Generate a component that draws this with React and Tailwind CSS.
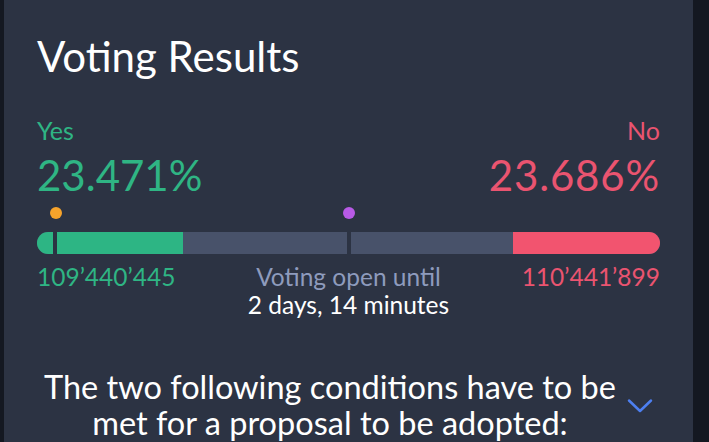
import React from 'react'

const yes = { pct: '23.471%', votes: '109’440’445' }
const no = { pct: '23.686%', votes: '110’441’899' }

export default function App() {
  return (
    <div className="flex h-[442px] w-[709px] overflow-hidden bg-[#141821] font-['Lato',sans-serif]">
      <div className="ml-[4px] flex w-[689px] flex-col bg-[#2c3343] px-[33px] pt-[31px]">
        <h1 className="text-[42px] leading-[1.2] font-normal text-white">Voting Results</h1>

        <div className="mt-[34px] flex items-start justify-between">
          <div className="flex flex-col">
            <span className="text-[25px] leading-[1.2] text-[#2fb584]">Yes</span>
            <span className="mt-[5px] text-[42px] leading-[1.2] text-[#2fb584]">{yes.pct}</span>
          </div>
          <div className="flex flex-col items-end">
            <span className="text-[25px] leading-[1.2] text-[#ea5470]">No</span>
            <span className="mt-[5px] text-[42px] leading-[1.2] tracking-[0.02em] text-[#ea5470]">{no.pct}</span>
          </div>
        </div>

        {/* quorum markers */}
        <div className="relative mt-[6px] h-[12px]">
          <span className="absolute left-[13px] top-0 h-[12px] w-[12px] rounded-full bg-[#f6a32b]" />
          <span className="absolute left-[306px] top-0 h-[12px] w-[12px] rounded-full bg-[#b85ae6]" />
        </div>

        {/* result bar */}
        <div className="relative mt-[13px] flex h-[22px] overflow-hidden rounded-full bg-[#48526a]">
          <div className="h-full bg-[#2db584]" style={{ width: 146 }} />
          <div className="flex-1" />
          <div className="h-full bg-[#f2546f]" style={{ width: 147 }} />
          <span className="absolute left-[16px] top-0 h-full w-[4px] bg-[#2c3343]" />
          <span className="absolute left-[310px] top-0 h-full w-[4px] bg-[#2c3343]" />
        </div>

        <div className="mt-[9px] flex items-start justify-between">
          <span className="w-[170px] text-[24.5px] leading-[28px] text-[#2fb584]">{yes.votes}</span>
          <div className="flex flex-col items-center">
            <span className="text-[24.5px] leading-[28px] text-[#8e9bbd]">Voting open until</span>
            <span className="text-[24.5px] leading-[28px] text-white">2 days, 14 minutes</span>
          </div>
          <span className="w-[170px] text-right text-[24.5px] leading-[28px] text-[#ea5470]">{no.votes}</span>
        </div>

        <div className="mt-[50px] flex items-center">
          <p className="flex-1 text-center text-[32.5px] leading-[36px] text-white">
            The two following conditions have to be
            <br />
            met for a proposal to be adopted:
          </p>
          <svg width="26" height="16" viewBox="0 0 26 16" className="ml-[4px] mr-[7px] mt-[3px] shrink-0">
            <path d="M2 2.5 L13 13 L24 2.5" fill="none" stroke="#4d7ff0" strokeWidth="2.5" strokeLinecap="round" strokeLinejoin="round" />
          </svg>
        </div>
      </div>
      <div className="flex-1" />
    </div>
  )
}
